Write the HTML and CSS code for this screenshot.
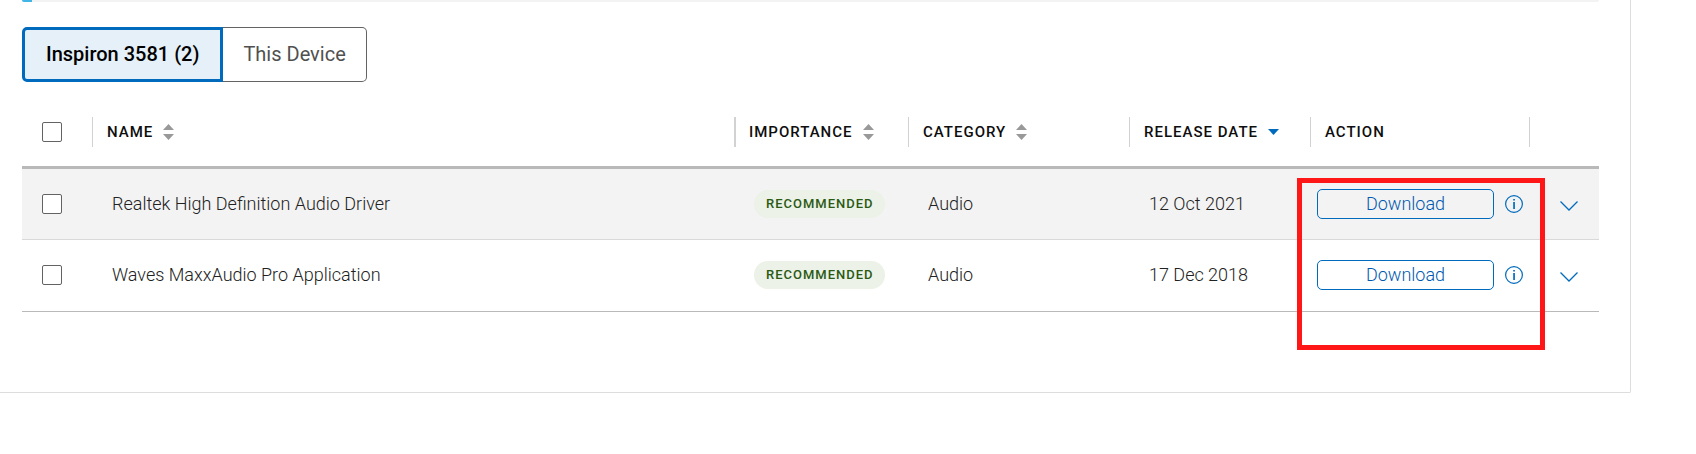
FILE: index.html
```html
<!DOCTYPE html>
<html lang="en">
<head>
<meta charset="utf-8">
<meta name="viewport" content="width=device-width, initial-scale=1">
<title>Drivers</title>
<link rel="stylesheet" href="styles.css">
</head>
<body>
<svg class="sprite" aria-hidden="true">
  <symbol id="sort" viewBox="0 0 11 16"><path d="M5.500 0 11 6H0zM0 10h11l-5.500 6z"/></symbol>
  <symbol id="sorted" viewBox="0 0 11 16"><path d="M0 5h11l-5.500 6z"/></symbol>
  <symbol id="info" viewBox="0 0 18 18"><circle cx="9" cy="9" r="8.400" fill="none" stroke="currentColor" stroke-width="1.200"/><path fill="currentColor" d="M8.200 3.900h1.700v1.600H8.200zM8.200 7h1.700v7H8.200z"/></symbol>
  <symbol id="chevron" viewBox="0 0 18 10"><path d="M.5.500 9 9 17.500.5" fill="none" stroke="currentColor" stroke-width="1.300"/></symbol>
</svg>
<main class="panel">
  <div class="progress"><div class="progress-value"></div></div>
  <div class="tabs" role="tablist">
    <button class="tab tab-active" type="button" role="tab" aria-selected="true">Inspiron 3581 (2)</button>
    <button class="tab" type="button" role="tab" aria-selected="false">This Device</button>
  </div>
  <table class="drivers">
    <colgroup>
      <col class="col-edge"><col><col class="col-importance"><col class="col-category"><col class="col-date"><col class="col-action"><col class="col-edge">
    </colgroup>
    <thead>
      <tr>
        <th class="check-cell"><input class="check" type="checkbox" aria-label="Select all drivers"></th>
        <th><div class="head"><button class="sort" type="button">NAME<svg class="sort-icon"><use href="#sort"/></svg></button></div></th>
        <th><div class="head head-strong"><button class="sort" type="button">IMPORTANCE<svg class="sort-icon"><use href="#sort"/></svg></button></div></th>
        <th><div class="head"><button class="sort" type="button">CATEGORY<svg class="sort-icon"><use href="#sort"/></svg></button></div></th>
        <th aria-sort="descending"><div class="head"><button class="sort" type="button">RELEASE DATE<svg class="sort-icon sort-icon-on"><use href="#sorted"/></svg></button></div></th>
        <th><div class="head">ACTION</div></th>
        <th><div class="head"></div></th>
      </tr>
    </thead>
    <tbody>
      <tr>
        <td class="check-cell"><input class="check" type="checkbox" aria-label="Select Realtek High Definition Audio Driver"></td>
        <td>Realtek High Definition Audio Driver</td>
        <td><span class="badge">RECOMMENDED</span></td>
        <td>Audio</td>
        <td>12 Oct 2021</td>
        <td class="action-cell"><div class="actions"><button class="download" type="button">Download</button><button class="icon-button" type="button" aria-label="Driver information"><svg class="info-icon"><use href="#info"/></svg></button></div></td>
        <td class="expand-cell"><button class="icon-button" type="button" aria-label="Expand row"><svg class="chevron-icon"><use href="#chevron"/></svg></button></td>
      </tr>
      <tr>
        <td class="check-cell"><input class="check" type="checkbox" aria-label="Select Waves MaxxAudio Pro Application"></td>
        <td>Waves MaxxAudio Pro Application</td>
        <td><span class="badge">RECOMMENDED</span></td>
        <td>Audio</td>
        <td>17 Dec 2018</td>
        <td class="action-cell"><div class="actions"><button class="download" type="button">Download</button><button class="icon-button" type="button" aria-label="Driver information"><svg class="info-icon"><use href="#info"/></svg></button></div></td>
        <td class="expand-cell"><button class="icon-button" type="button" aria-label="Expand row"><svg class="chevron-icon"><use href="#chevron"/></svg></button></td>
      </tr>
    </tbody>
  </table>
  <div class="highlight"></div>
</main>
</body>
</html>
```
FILE: styles.css
```css
*, *::before, *::after { box-sizing: border-box; }

body {
  margin: 0;
  background: #fff;
  color: #222;
  font-family: Roboto, "Liberation Sans", sans-serif;
  font-size: 18px;
  font-weight: 300;
  line-height: 24px;
}

button {
  margin: 0;
  padding: 0;
  border: 0;
  background: none;
  color: inherit;
  font: inherit;
  letter-spacing: inherit;
  cursor: pointer;
}

.sprite { position: absolute; width: 0; height: 0; }

.panel {
  position: relative;
  margin-right: 65px;
  padding: 0 31px 80px 22px;
  border: 1px solid #ddd;
  border-width: 0 1px 1px 0;
  border-bottom-right-radius: 2px;
}

.progress { height: 2px; background: #f3f3f3; border-bottom-right-radius: 2px; }
.progress-value { width: 10px; height: 2px; background: #41b6e6; border-bottom-left-radius: 2px; }

.tabs { display: flex; margin: 25px 0 16px; }
.tab {
  height: 55px;
  padding: 0 20px 2px;
  border: 1px solid #636363;
  border-left: 0;
  border-radius: 0 5px 5px 0;
  color: #505050;
  font-size: 20px;
  font-weight: 400;
}
.tab-active {
  padding: 0 21px 2px;
  border: 3px solid #006bbd;
  border-radius: 5px 0 0 5px;
  background: #e5f0f8;
  color: #000;
  font-weight: 500;
}

.drivers { width: 100%; table-layout: fixed; border-collapse: separate; border-spacing: 0; }
.col-edge { width: 70px; }
.col-importance { width: 174px; }
.col-category { width: 221px; }
.col-date { width: 181px; }
.col-action { width: 219px; }

th {
  height: 71px;
  padding: 0;
  border-bottom: 3px solid #b9b9b9;
  color: #0e0e0e;
  font-size: 15px;
  font-weight: 500;
  letter-spacing: 1px;
  text-align: left;
}
.head {
  display: flex;
  align-items: center;
  height: 30px;
  padding-left: 14px;
  border-left: 1px solid #d2d2d2;
}
.head-strong { padding-left: 13px; border-left-width: 2px; }
.sort { display: flex; align-items: center; gap: 10px; }
.sort-icon { width: 11px; height: 16px; fill: #999; }
.sort-icon-on { fill: #006bbd; }

td { height: 71px; padding: 0 0 0 20px; border-bottom: 1px solid #d9d9d9; }
tbody tr:nth-child(odd) { background: #f3f3f3; }
tbody tr:last-child td { height: 72px; padding-bottom: 1px; border-bottom-color: #b9b9b9; }

.check-cell { padding: 0 0 0 20px; }
.check {
  display: block;
  appearance: none;
  width: 20px;
  height: 20px;
  margin: 0;
  border: 1px solid #636363;
  border-radius: 2px;
  background: #fff;
}

.badge {
  display: inline-block;
  padding: 0 11px 0 12px;
  border-radius: 14px;
  background: #ecf2e7;
  color: #2b5a14;
  font-size: 13px;
  font-weight: 500;
  line-height: 28px;
  letter-spacing: 1px;
}

.action-cell { padding: 0 6px 0 7px; }
.actions { display: flex; align-items: center; gap: 11px; }
.download {
  flex: 1;
  height: 30px;
  border: 1px solid #006bbd;
  border-radius: 5px;
  color: #0059b0;
}
.icon-button { display: block; color: #006bbd; }
.info-icon { display: block; width: 18px; height: 18px; }
.expand-cell { padding: 4px 0 0 31px; }
.chevron-icon { display: block; width: 18px; height: 10px; }

/* Callout frame drawn over the action column */
.highlight {
  position: absolute;
  top: 178px;
  right: 85px;
  width: 248px;
  height: 172px;
  border: 5px solid #ff1616;
  pointer-events: none;
}
```
